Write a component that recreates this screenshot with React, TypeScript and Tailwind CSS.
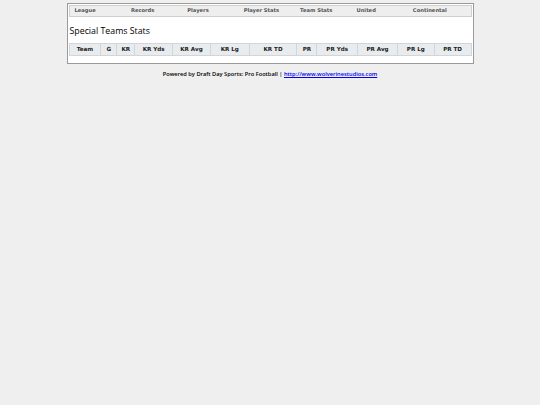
const navLinks = [
  "League",
  "Records",
  "Players",
  "Player Stats",
  "Team Stats",
  "United",
  "Continental",
];

// header cells, widths read off the reference
const columns: { label: string; w: string }[] = [
  { label: "Team", w: "w-[32px]" },
  { label: "G", w: "w-[16px]" },
  { label: "KR", w: "w-[18px]" },
  { label: "KR Yds", w: "w-[38px]" },
  { label: "KR Avg", w: "w-[38px]" },
  { label: "KR Lg", w: "w-[39px]" },
  { label: "KR TD", w: "w-[48px]" },
  { label: "PR", w: "w-[20px]" },
  { label: "PR Yds", w: "w-[41px]" },
  { label: "PR Avg", w: "w-[40px]" },
  { label: "PR Lg", w: "w-[37px]" },
  { label: "PR TD", w: "w-[37px]" },
];

const App = () => {
  return (
    <div className="min-h-[405px] bg-[#efefef] pt-[3px] font-['DejaVu_Sans',sans-serif]">
      <div className="mx-auto w-[407px] border border-[#9a9a9a] bg-white px-[1px] pb-[7px] pt-[1px]">
        <div className="flex h-[12px] items-center border border-[#cfcfcf] bg-[#eeeeee] pl-[5px]">
          {navLinks.map((link) => (
            <span
              key={link}
              className="w-[56.4px] text-[5.2px] font-bold leading-none text-[#555]"
            >
              {link}
            </span>
          ))}
        </div>
        <h1 className="mt-[8px] pl-[1px] font-['Open_Sans',sans-serif] text-[8.8px] font-medium leading-[12px] text-black">
          Special Teams Stats
        </h1>
        <table className="mt-[6px] w-[403px] border-collapse">
          <thead>
            <tr>
              {columns.map((col) => (
                <th
                  key={col.label}
                  className={`${col.w} h-[12px] border border-[#d2d6da] bg-[#e8ecef] p-0 text-center text-[5.6px] font-bold leading-none text-[#222]`}
                >
                  {col.label}
                </th>
              ))}
            </tr>
          </thead>
        </table>
      </div>
      <p className="mt-[8px] text-center font-['Open_Sans',sans-serif] text-[5.7px] font-semibold leading-none text-black">
        Powered by Draft Day Sports: Pro Football |{" "}
        <a href="#" className="text-[#0000ee] underline">
          http://www.wolverinestudios.com
        </a>
      </p>
    </div>
  );
};

export default App;
